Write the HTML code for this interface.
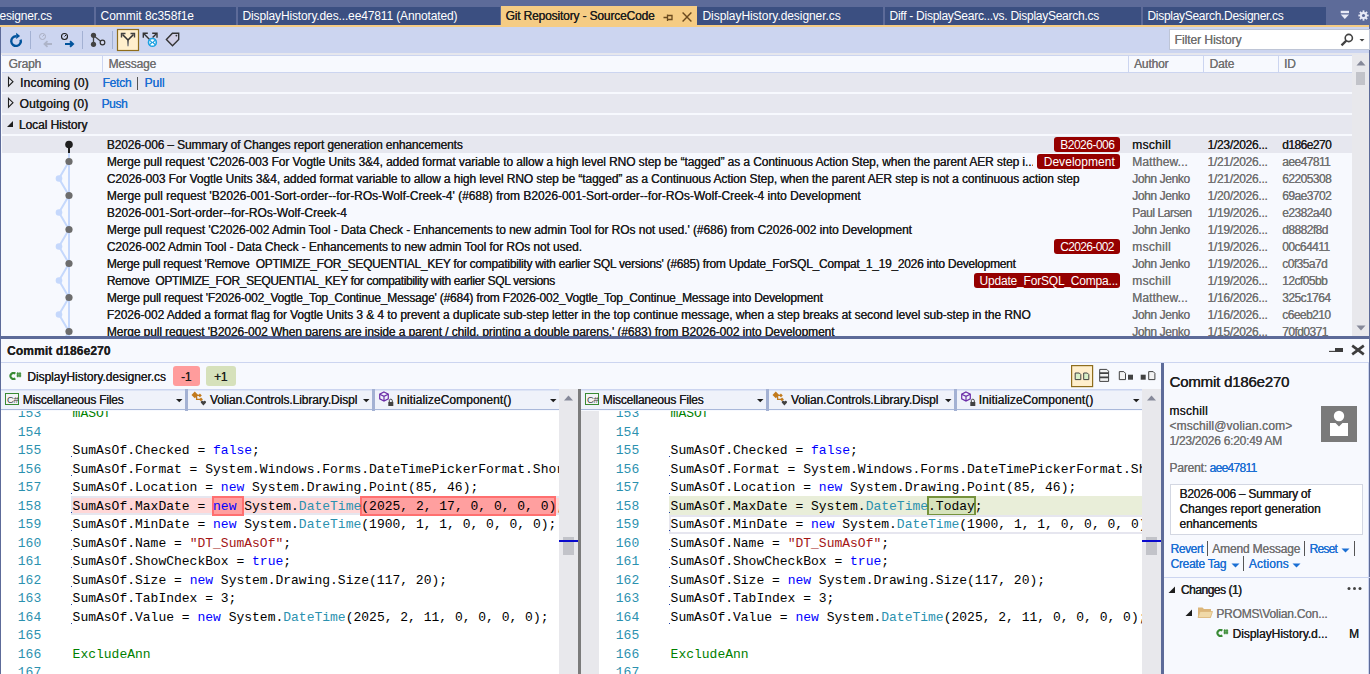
<!DOCTYPE html><html><head><meta charset="utf-8"><style>
*{box-sizing:border-box;margin:0;padding:0}
html,body{width:1370px;height:674px;overflow:hidden;background:#f7f9fe;font-family:"Liberation Sans",sans-serif;font-size:12px;letter-spacing:-0.15px;color:#1e1e1e;position:relative}
.a{position:absolute}
.t{position:absolute;white-space:pre;line-height:12px;text-shadow:0.15px 0 0 currentColor}
.sb{text-shadow:0.35px 0 0 currentColor}
.g{color:#717171}
.lk{color:#1a6fd3}
.w{color:#fff;text-shadow:none !important}
.sec{position:absolute;left:2px;width:1350px;height:19px;background:#e6e7ef}
.badge{position:absolute;height:15px;background:#950000;border-radius:3px}
.code{font-family:"Liberation Mono",monospace;font-size:13px;letter-spacing:0}
.cl{position:absolute;white-space:pre;line-height:18.5px;height:18.5px}
.ln{color:#2b91af}
.kw{color:#0000ff}
.ty{color:#2b91af}
.st{color:#a31515}
.cm{color:#008000}
.dd{position:absolute;top:390px;height:20px;background:#eff2fa;border-top:1px solid #dde4f5;border-bottom:1px solid #a9b8da}
.sep3{position:absolute;top:389px;width:3px;height:22px;background:#a3b1d3}
</style></head><body>
<div class="a" style="left:0;top:0;width:1370px;height:27px;background:#5d6b99"></div>
<div class="a" style="left:0px;top:7px;width:94px;height:18px;background:#3b4f81"></div>
<span class="t w" style="left:-0.5px;top:10px;letter-spacing:-0.170px;">esigner.cs</span>
<div class="a" style="left:96px;top:7px;width:140px;height:18px;background:#3b4f81"></div>
<span class="t w" style="left:100.5px;top:10px;letter-spacing:-0.039px;">Commit 8c358f1e</span>
<div class="a" style="left:238px;top:7px;width:262px;height:18px;background:#3b4f81"></div>
<span class="t w" style="left:242.5px;top:10px;letter-spacing:-0.137px;">DisplayHistory.des...ee47811 (Annotated)</span>
<div class="a" style="left:697px;top:7px;width:186px;height:18px;background:#3b4f81"></div>
<span class="t w" style="left:702.5px;top:10px;letter-spacing:-0.065px;">DisplayHistory.designer.cs</span>
<div class="a" style="left:885px;top:7px;width:256px;height:18px;background:#3b4f81"></div>
<span class="t w" style="left:889.5px;top:10px;letter-spacing:-0.264px;">Diff - DisplaySearc...vs. DisplaySearch.cs</span>
<div class="a" style="left:1143px;top:7px;width:183px;height:18px;background:#3b4f81"></div>
<span class="t w" style="left:1147.5px;top:10px;letter-spacing:-0.296px;">DisplaySearch.Designer.cs</span>
<div class="a" style="left:501px;top:6px;width:196px;height:21px;background:#f5cc84"></div>
<span class="t " style="left:505.5px;top:10px;letter-spacing:-0.158px;">Git Repository - SourceCode</span>
<svg class="a" style="left:663px;top:13px" width="10" height="9" viewBox="0 0 10 9"><path d="M0.5 4.5H4M4.5 1.5V8M4.5 2.5H9V6.5H4.5" stroke="#6b4a1e" stroke-width="1.3" fill="none"/></svg>
<svg class="a" style="left:682px;top:12px" width="10" height="10" viewBox="0 0 10 10"><path d="M0.6 0.6L9.4 9.4M9.4 0.6L0.6 9.4" stroke="#6b4a1e" stroke-width="1.4"/></svg>
<svg class="a" style="left:1340px;top:10px" width="10" height="10" viewBox="0 0 10 10"><rect x="0.7" y="0.8" width="8.3" height="2.4" fill="#e8eaf6"/><path d="M0.7 4.6H9L4.85 9Z" fill="#e8eaf6"/></svg>
<svg class="a" style="left:1357.5px;top:9.5px" width="11" height="11" viewBox="0 0 12 12"><g fill="#e8eaf6"><circle cx="6" cy="6" r="3.9"/><rect x="5" y="0.4" width="2" height="11.2"/><rect x="0.4" y="5" width="11.2" height="2"/><rect x="5" y="0.4" width="2" height="11.2" transform="rotate(45 6 6)"/><rect x="5" y="0.4" width="2" height="11.2" transform="rotate(-45 6 6)"/></g><circle cx="6" cy="6" r="1.7" fill="#5d6b99"/></svg>
<div class="a" style="left:0;top:25px;width:1369px;height:2px;background:#f5cc84"></div>
<div class="a" style="left:1px;top:27px;width:1368px;height:26px;background:#ccd5f0"></div>
<div class="a" style="left:1px;top:53px;width:1368px;height:2px;background:#e6e7ed"></div>
<div class="a" style="left:0;top:27px;width:1px;height:647px;background:#5d6b99"></div>
<div class="a" style="left:1369px;top:25px;width:1px;height:649px;background:#5d6b99"></div>
<svg class="a" style="left:0;top:27px" width="190" height="26" viewBox="0 0 190 26">
<g fill="#a3b1d3"><rect x="30" y="4" width="1" height="18"/><rect x="82" y="4" width="1" height="18"/><rect x="112" y="4" width="1" height="18"/></g>
<path d="M20.6 12.6A4.8 4.8 0 1 1 16.2 9.3" fill="none" stroke="#00539c" stroke-width="2.4"/>
<path d="M16.2 5.8L20.1 9L16.2 12Z" fill="#00539c"/>
<circle cx="42.5" cy="9.5" r="3" fill="none" stroke="#a9aec0" stroke-width="1"/><path d="M42.5 9.5L44 8" stroke="#a9aec0" stroke-width="1"/>
<path d="M52 17H45M47.5 14.2L44.5 17L47.5 19.8" fill="none" stroke="#aeb4c8" stroke-width="1.8"/>
<circle cx="64.5" cy="9.5" r="3" fill="none" stroke="#1e1e1e" stroke-width="1.1"/><path d="M64.5 9.5L66 8" stroke="#1e1e1e" stroke-width="1"/>
<path d="M65 17H72.5M70 14.2L73 17L70 19.8" fill="none" stroke="#00539c" stroke-width="2"/>
<line x1="93.5" y1="8.5" x2="93.5" y2="17.3" stroke="#424242" stroke-width="1.3"/>
<line x1="93.5" y1="8.5" x2="101" y2="14.5" stroke="#424242" stroke-width="1.1"/>
<circle cx="93.5" cy="8.3" r="2.6" fill="#424242"/><circle cx="93.5" cy="17.3" r="2.6" fill="#424242"/>
<circle cx="102.5" cy="15.5" r="2.3" fill="#d6dbf2" stroke="#333" stroke-width="1.2"/>
<rect x="117.5" y="2.5" width="21" height="21" fill="#ffefcc" stroke="#8f6d1c" stroke-width="1.2"/>
<defs><linearGradient id="yg" x1="0" y1="0" x2="0" y2="1"><stop offset="0" stop-color="#333"/><stop offset="1" stop-color="#999"/></linearGradient></defs><path d="M128 13L122.5 7.5M128 13L133.5 7.5" fill="none" stroke="#333" stroke-width="1.6"/><rect x="127.2" y="12.5" width="1.6" height="6.8" fill="url(#yg)"/>
<path d="M121.5 10.5V6.5H125.5M134.5 10.5V6.5H130.5" fill="none" stroke="#424242" stroke-width="1.4"/>
<path d="M143.9 6.8L149.8 12.7M156.4 6.8L152.6 10.6" fill="none" stroke="#333" stroke-width="1.4"/>
<path d="M143.3 10.8V6.2H147.8M152.2 6.2H157V10.8" fill="none" stroke="#333" stroke-width="1.4"/>
<circle cx="152.4" cy="15.4" r="3.9" fill="#fff" stroke="#1ba1e2" stroke-width="1.6"/>
<path d="M149.4 12.9L151.9 15.4L149.4 17.9M155.4 12.9L152.9 15.4L155.4 17.9" fill="none" stroke="#1ba1e2" stroke-width="1.3"/>
<path d="M172.4 6.2H178.7V12.5L172.5 18.7L166.4 12.6Z" fill="#d0cfe6" stroke="#333" stroke-width="1.4" stroke-linejoin="miter"/>
<circle cx="176.4" cy="8.6" r="0.9" fill="#333"/>
</svg>
<div class="a" style="left:1169px;top:29px;width:201px;height:21px;background:#fff;border:1px solid #bec5d6"></div>
<span class="t g" style="left:1174.6px;top:34px;letter-spacing:-0.034px;">Filter History</span>
<svg class="a" style="left:1340px;top:33px" width="28" height="14" viewBox="0 0 28 14"><circle cx="8.8" cy="5" r="3.6" fill="none" stroke="#424242" stroke-width="1.6"/><path d="M6.3 7.6L1.5 12.4" stroke="#424242" stroke-width="2.2"/><path d="M19.5 6H24.5L22 8.5Z" fill="#424242"/></svg>
<div class="a" style="left:2px;top:55px;width:1350px;height:18px;background:#f7f9fe;border-top:1px solid #ccd5f0;border-bottom:1px solid #ccd5f0"></div>
<div class="a" style="left:102px;top:56px;width:1px;height:16px;background:#ccd5f0"></div>
<div class="a" style="left:1128px;top:56px;width:1px;height:16px;background:#ccd5f0"></div>
<div class="a" style="left:1203px;top:56px;width:1px;height:16px;background:#ccd5f0"></div>
<div class="a" style="left:1278px;top:56px;width:1px;height:16px;background:#ccd5f0"></div>
<span class="t g" style="left:8.5px;top:58px;">Graph</span>
<span class="t g" style="left:108.5px;top:58px;">Message</span>
<span class="t g" style="left:1134px;top:58px;">Author</span>
<span class="t g" style="left:1209.5px;top:58px;">Date</span>
<span class="t g" style="left:1284px;top:58px;">ID</span>
<div class="sec" style="top:73px"></div>
<div class="sec" style="top:94px"></div>
<div class="sec" style="top:115px"></div>
<svg class="a" style="left:7px;top:76px" width="8" height="12" viewBox="0 0 8 12"><path d="M1.5 1.3L6 5.7L1.5 10.1Z" fill="none" stroke="#1e1e1e" stroke-width="1.1"/></svg>
<svg class="a" style="left:7px;top:97px" width="8" height="12" viewBox="0 0 8 12"><path d="M1.5 1.3L6 5.7L1.5 10.1Z" fill="none" stroke="#1e1e1e" stroke-width="1.1"/></svg>
<svg class="a" style="left:6px;top:120px" width="8" height="8" viewBox="0 0 8 8"><path d="M7 1V7H1Z" fill="#1e1e1e"/></svg>
<span class="t sb" style="left:20px;top:77px;letter-spacing:0.172px;">Incoming (0)</span>
<span class="t lk" style="left:102.5px;top:77px;letter-spacing:-0.229px;">Fetch</span>
<span class="a" style="left:137px;top:77px;width:1px;height:13px;background:#555"></span>
<span class="t lk" style="left:144.5px;top:77px;letter-spacing:0.028px;">Pull</span>
<span class="t sb" style="left:19.5px;top:98px;letter-spacing:0.172px;">Outgoing (0)</span>
<span class="t lk" style="left:101.5px;top:98px;letter-spacing:-0.386px;">Push</span>
<span class="t sb" style="left:18.8px;top:119px;letter-spacing:-0.072px;">Local History</span>
<div class="a" style="left:1352px;top:55px;width:17px;height:281px;background:#e8e8ec"></div>
<svg class="a" style="left:1356px;top:60px" width="10" height="6"><path d="M0.5 5.5L5 0.5L9.5 5.5Z" fill="#868999"/></svg>
<div class="a" style="left:1356px;top:72px;width:9px;height:13px;background:#c2c3c9"></div>
<svg class="a" style="left:1356px;top:325px" width="10" height="6"><path d="M0.5 0.5L5 5.5L9.5 0.5Z" fill="#868999"/></svg>
<div class="a" style="left:0;top:136px;width:1352px;height:200px;overflow:hidden">
<div class="a" style="left:2px;top:0;width:1350px;height:17px;background:#e6e7ef"></div>
<svg class="a" style="left:0;top:0" width="100" height="200" viewBox="0 0 100 200"><line x1="69" y1="17" x2="69" y2="200" stroke="#c5d8fc" stroke-width="2"/><polyline points="69,25.5 59,42.5 69,59.5" fill="none" stroke="#c5d8fc" stroke-width="2"/><polyline points="69,59.5 59,76.5 69,93.5" fill="none" stroke="#c5d8fc" stroke-width="2"/><polyline points="69,93.5 59,110.5 69,127.5" fill="none" stroke="#c5d8fc" stroke-width="2"/><polyline points="69,127.5 59,144.5 69,161.5" fill="none" stroke="#c5d8fc" stroke-width="2"/><polyline points="69,161.5 59,178.5 69,195.5" fill="none" stroke="#c5d8fc" stroke-width="2"/><polyline points="69,195.5 59,212.5 69,229.5" fill="none" stroke="#c5d8fc" stroke-width="2"/><circle cx="69" cy="25.5" r="3.6" fill="#6d6d6d"/><circle cx="59" cy="42.5" r="3.3" fill="#c5d8fc"/><circle cx="69" cy="59.5" r="3.6" fill="#6d6d6d"/><circle cx="59" cy="76.5" r="3.3" fill="#c5d8fc"/><circle cx="69" cy="93.5" r="3.6" fill="#6d6d6d"/><circle cx="59" cy="110.5" r="3.3" fill="#c5d8fc"/><circle cx="69" cy="127.5" r="3.6" fill="#6d6d6d"/><circle cx="59" cy="144.5" r="3.3" fill="#c5d8fc"/><circle cx="69" cy="161.5" r="3.6" fill="#6d6d6d"/><circle cx="59" cy="178.5" r="3.3" fill="#c5d8fc"/><circle cx="69" cy="195.5" r="3.6" fill="#6d6d6d"/><line x1="69" y1="8" x2="69" y2="17" stroke="#1e1e1e" stroke-width="2"/><circle cx="69" cy="8.5" r="3.8" fill="#1e1e1e"/></svg>
<div class="a" style="left:104px;top:0px;width:946px;height:17px;overflow:hidden">
<span class="t " style="left:2.8px;top:3px;letter-spacing:-0.148px;">B2026-006 – Summary of Changes report generation enhancements</span>
</div>
<div class="badge" style="left:1054px;top:1px;width:66px"></div>
<span class="t w" style="left:1060.3px;top:3px;letter-spacing:-0.515px;">B2026-006</span>
<span class="t " style="left:1132.2px;top:3px;letter-spacing:0.305px;">mschill</span>
<span class="t " style="left:1207.5px;top:3px;letter-spacing:-0.281px;">1/23/2026...</span>
<span class="t " style="left:1282.2px;top:3px;letter-spacing:-0.556px;">d186e270</span>
<div class="a" style="left:104px;top:17px;width:929px;height:17px;overflow:hidden">
<span class="t " style="left:2.8px;top:3px;letter-spacing:-0.101px;">Merge pull request &#x27;C2026-003 For Vogtle Units 3&amp;4, added format variable to allow a high level RNO step be “tagged” as a Continuous Action Step, when the parent AER step i...</span>
</div>
<div class="badge" style="left:1037px;top:18px;width:83px"></div>
<span class="t w" style="left:1043.7px;top:20px;letter-spacing:0.048px;">Development</span>
<span class="t g" style="left:1132.2px;top:20px;letter-spacing:0.100px;">Matthew...</span>
<span class="t g" style="left:1207.5px;top:20px;letter-spacing:-0.281px;">1/21/2026...</span>
<span class="t g" style="left:1282.2px;top:20px;letter-spacing:-0.556px;">aee47811</span>
<div class="a" style="left:104px;top:34px;width:1022px;height:17px;overflow:hidden">
<span class="t " style="left:2.8px;top:3px;letter-spacing:-0.092px;">C2026-003 For Vogtle Units 3&amp;4, added format variable to allow a high level RNO step be “tagged” as a Continuous Action Step, when the parent AER step is not a continuous action step</span>
</div>
<span class="t g" style="left:1132.2px;top:37px;letter-spacing:-0.388px;">John Jenko</span>
<span class="t g" style="left:1207.5px;top:37px;letter-spacing:-0.281px;">1/21/2026...</span>
<span class="t g" style="left:1282.2px;top:37px;letter-spacing:-0.556px;">62205308</span>
<div class="a" style="left:104px;top:51px;width:1022px;height:17px;overflow:hidden">
<span class="t " style="left:2.8px;top:3px;letter-spacing:-0.009px;">Merge pull request &#x27;B2026-001-Sort-order--for-ROs-Wolf-Creek-4&#x27; (#688) from B2026-001-Sort-order--for-ROs-Wolf-Creek-4 into Development</span>
</div>
<span class="t g" style="left:1132.2px;top:54px;letter-spacing:-0.388px;">John Jenko</span>
<span class="t g" style="left:1207.5px;top:54px;letter-spacing:-0.281px;">1/20/2026...</span>
<span class="t g" style="left:1282.2px;top:54px;letter-spacing:-0.556px;">69ae3702</span>
<div class="a" style="left:104px;top:68px;width:1022px;height:17px;overflow:hidden">
<span class="t " style="left:2.8px;top:3px;letter-spacing:-0.027px;">B2026-001-Sort-order--for-ROs-Wolf-Creek-4</span>
</div>
<span class="t g" style="left:1132.2px;top:71px;letter-spacing:-0.425px;">Paul Larsen</span>
<span class="t g" style="left:1207.5px;top:71px;letter-spacing:-0.281px;">1/19/2026...</span>
<span class="t g" style="left:1282.2px;top:71px;letter-spacing:-0.556px;">e2382a40</span>
<div class="a" style="left:104px;top:85px;width:1022px;height:17px;overflow:hidden">
<span class="t " style="left:2.8px;top:3px;letter-spacing:-0.066px;">Merge pull request &#x27;C2026-002 Admin Tool - Data Check - Enhancements to new admin Tool for ROs not used.&#x27; (#686) from C2026-002 into Development</span>
</div>
<span class="t g" style="left:1132.2px;top:88px;letter-spacing:-0.388px;">John Jenko</span>
<span class="t g" style="left:1207.5px;top:88px;letter-spacing:-0.281px;">1/19/2026...</span>
<span class="t g" style="left:1282.2px;top:88px;letter-spacing:-0.556px;">d8882f8d</span>
<div class="a" style="left:104px;top:102px;width:946px;height:17px;overflow:hidden">
<span class="t " style="left:2.8px;top:3px;letter-spacing:-0.088px;">C2026-002 Admin Tool - Data Check - Enhancements to new admin Tool for ROs not used.</span>
</div>
<div class="badge" style="left:1054px;top:103px;width:66px"></div>
<span class="t w" style="left:1060.2px;top:105px;letter-spacing:-0.649px;">C2026-002</span>
<span class="t g" style="left:1132.2px;top:105px;letter-spacing:0.305px;">mschill</span>
<span class="t g" style="left:1207.5px;top:105px;letter-spacing:-0.281px;">1/19/2026...</span>
<span class="t g" style="left:1282.2px;top:105px;letter-spacing:-0.556px;">00c64411</span>
<div class="a" style="left:104px;top:119px;width:1022px;height:17px;overflow:hidden">
<span class="t " style="left:2.8px;top:3px;letter-spacing:-0.268px;">Merge pull request &#x27;Remove  OPTIMIZE_FOR_SEQUENTIAL_KEY for compatibility with earlier SQL versions&#x27; (#685) from Update_ForSQL_Compat_1_19_2026 into Development</span>
</div>
<span class="t g" style="left:1132.2px;top:122px;letter-spacing:-0.388px;">John Jenko</span>
<span class="t g" style="left:1207.5px;top:122px;letter-spacing:-0.281px;">1/19/2026...</span>
<span class="t g" style="left:1282.2px;top:122px;letter-spacing:-0.556px;">c0f35a7d</span>
<div class="a" style="left:104px;top:136px;width:866px;height:17px;overflow:hidden">
<span class="t " style="left:2.8px;top:3px;letter-spacing:-0.356px;">Remove  OPTIMIZE_FOR_SEQUENTIAL_KEY for compatibility with earlier SQL versions</span>
</div>
<div class="badge" style="left:974px;top:137px;width:146px"></div>
<span class="t w" style="left:979.6px;top:139px;letter-spacing:-0.202px;">Update_ForSQL_Compa...</span>
<span class="t g" style="left:1132.2px;top:139px;letter-spacing:0.305px;">mschill</span>
<span class="t g" style="left:1207.5px;top:139px;letter-spacing:-0.281px;">1/19/2026...</span>
<span class="t g" style="left:1282.2px;top:139px;letter-spacing:-0.556px;">12cf05bb</span>
<div class="a" style="left:104px;top:153px;width:1022px;height:17px;overflow:hidden">
<span class="t " style="left:2.8px;top:3px;letter-spacing:-0.202px;">Merge pull request &#x27;F2026-002_Vogtle_Top_Continue_Message&#x27; (#684) from F2026-002_Vogtle_Top_Continue_Message into Development</span>
</div>
<span class="t g" style="left:1132.2px;top:156px;letter-spacing:0.100px;">Matthew...</span>
<span class="t g" style="left:1207.5px;top:156px;letter-spacing:-0.281px;">1/16/2026...</span>
<span class="t g" style="left:1282.2px;top:156px;letter-spacing:-0.556px;">325c1764</span>
<div class="a" style="left:104px;top:170px;width:1022px;height:17px;overflow:hidden">
<span class="t " style="left:2.8px;top:3px;letter-spacing:-0.084px;">F2026-002 Added a format flag for Vogtle Units 3 &amp; 4 to prevent a duplicate sub-step letter in the top continue message, when a step breaks at second level sub-step in the RNO</span>
</div>
<span class="t g" style="left:1132.2px;top:173px;letter-spacing:-0.388px;">John Jenko</span>
<span class="t g" style="left:1207.5px;top:173px;letter-spacing:-0.281px;">1/16/2026...</span>
<span class="t g" style="left:1282.2px;top:173px;letter-spacing:-0.556px;">c6eeb210</span>
<div class="a" style="left:104px;top:187px;width:1022px;height:17px;overflow:hidden">
<span class="t " style="left:2.8px;top:3px;letter-spacing:-0.099px;">Merge pull request &#x27;B2026-002 When parens are inside a parent / child, printing a double parens.&#x27; (#683) from B2026-002 into Development</span>
</div>
<span class="t g" style="left:1132.2px;top:190px;letter-spacing:-0.388px;">John Jenko</span>
<span class="t g" style="left:1207.5px;top:190px;letter-spacing:-0.281px;">1/15/2026...</span>
<span class="t g" style="left:1282.2px;top:190px;letter-spacing:-0.556px;">70fd0371</span>
</div>
<div class="a" style="left:0;top:336px;width:1370px;height:3px;background:#5d6b99"></div>
<div class="a" style="left:1px;top:362px;width:1368px;height:1px;background:#ccd5f0"></div>
<span class="t " style="left:7px;top:345px;letter-spacing:0.104px;font-weight:bold">Commit d186e270</span>
<svg class="a" style="left:1328px;top:344px" width="40" height="13" viewBox="0 0 40 13"><path d="M1 7.4H7.5" stroke="#3d3d3d" stroke-width="1.1"/><rect x="7" y="4" width="8" height="4" fill="#3d3d3d"/><path d="M24.2 1.6L35.8 10.4M35.8 1.6L24.2 10.4" stroke="#3d3d3d" stroke-width="2.6"/></svg>
<svg class="a" style="left:8.5px;top:372px" width="13" height="8" viewBox="0 0 13 8"><path d="M6.3 1.6A3 3 0 1 0 6.3 6.4" fill="none" stroke="#388a34" stroke-width="2.1"/><path d="M8.8 0.3V5.3M11 0.3V5.3M7.6 1.8H12.2M7.6 3.9H12.2" stroke="#388a34" stroke-width="1.3"/></svg>
<span class="t " style="left:27.3px;top:371px;letter-spacing:-0.049px;">DisplayHistory.designer.cs</span>
<div class="a" style="left:173px;top:366px;width:27px;height:20px;background:#ff9c9c;border-radius:3px"></div>
<span class="t " style="left:181px;top:371px;">-1</span>
<div class="a" style="left:206px;top:366px;width:30px;height:20px;background:#d6e1bb;border-radius:3px"></div>
<span class="t " style="left:214px;top:371px;">+1</span>
<div class="a" style="left:1px;top:389px;width:1160px;height:1px;background:#ccd5f0"></div>
<svg class="a" style="left:1070px;top:364px" width="90" height="24" viewBox="0 0 90 24">
<rect x="1.6" y="1.6" width="21" height="21" fill="#ffefcc" stroke="#8f6d1c" stroke-width="1.2"/>
<path d="M5.2 9H9.3L10.8 10.5V15.6H5.2Z" fill="#d8f0c8" stroke="#424242" stroke-width="1"/>
<path d="M13.7 9H17.3L18.8 10.5V15.6H13.7Z" fill="#d8f0c8" stroke="#424242" stroke-width="1"/>
<path d="M29.7 5.4H36.8L38.6 7.2V17.4H29.7Z" fill="#f3f3f3" stroke="#424242" stroke-width="1"/>
<path d="M29.7 9.2H38.6M29.7 13.4H38.6" stroke="#424242" stroke-width="1.8"/>
<path d="M49.3 7.6H53.8L55.5 9.3V15.6H49.3Z" fill="#f3f3f3" stroke="#424242" stroke-width="1"/>
<rect x="58" y="10.7" width="5" height="5" fill="#424242"/>
<rect x="70.7" y="10.7" width="5" height="5" fill="#424242"/>
<path d="M78.7 7.6H83.2L84.9 9.3V15.6H78.7Z" fill="#f3f3f3" stroke="#424242" stroke-width="1"/>
</svg>
<div class="a" style="left:1161px;top:363px;width:3px;height:311px;background:#5d6b99"></div>
<div class="dd" style="left:1px;width:184px"></div>
<div class="sep3" style="left:185px"></div>
<div class="a" style="left:5px;top:393px;width:14px;height:12px;border:1.5px solid #388a34;background:#f3f3f6"></div>
<span class="t" style="left:7px;top:395px;font-size:9.5px;line-height:9px;letter-spacing:-0.3px;color:#444;text-shadow:none">C#</span>
<span class="t " style="left:22.7px;top:394px;letter-spacing:-0.207px;">Miscellaneous Files</span>
<svg class="a" style="left:176px;top:399px" width="7" height="4" viewBox="0 0 7 4"><path d="M0 0H6.5L3.25 3.3Z" fill="#1e1e1e"/></svg>
<div class="dd" style="left:188px;width:184px"></div>
<div class="sep3" style="left:372px"></div>
<svg class="a" style="left:191px;top:391px" width="16" height="16" viewBox="0 0 16 16"><path d="M3.8 0.6L7.1 3.9L3.8 7.2L0.5 3.9Z" fill="#c27a1c"/><path d="M8.9 2.5L10.8 4.4L8.9 6.3L7 4.4Z" fill="#c27a1c"/><path d="M10 6.5L11.9 8.4L10 10.3L8.1 8.4Z" fill="#c27a1c"/><path d="M5.3 4.4H8M5.6 4.5V8.4H9" stroke="#c27a1c" stroke-width="1.3" fill="none"/><path d="M12.4 14.6L9.9 11.8A1.35 1.35 0 0 1 12.4 10.5A1.35 1.35 0 0 1 14.9 11.8Z" fill="#424242"/></svg>
<span class="t " style="left:209.9px;top:394px;letter-spacing:-0.087px;">Volian.Controls.Library.Displ</span>
<svg class="a" style="left:363px;top:399px" width="7" height="4" viewBox="0 0 7 4"><path d="M0 0H6.5L3.25 3.3Z" fill="#1e1e1e"/></svg>
<div class="dd" style="left:375px;width:184px"></div>
<svg class="a" style="left:379px;top:391px" width="16" height="16" viewBox="0 0 16 16"><path d="M5 1L9.3 3.2V7.8L5 10L0.7 7.8V3.2Z M0.7 3.2L5 5.4L9.3 3.2M5 5.4V10" fill="none" stroke="#6c2ea8" stroke-width="1.2"/><rect x="9.3" y="11" width="5" height="4" fill="#424242"/><path d="M10.3 11V9.7A1.5 1.5 0 0 1 13.3 9.7V11" fill="none" stroke="#424242" stroke-width="1"/></svg>
<span class="t " style="left:396.7px;top:394px;letter-spacing:0.060px;">InitializeComponent()</span>
<svg class="a" style="left:550px;top:399px" width="7" height="4" viewBox="0 0 7 4"><path d="M0 0H6.5L3.25 3.3Z" fill="#1e1e1e"/></svg>
<div class="dd" style="left:581px;width:185px"></div>
<div class="sep3" style="left:766px"></div>
<div class="a" style="left:585px;top:393px;width:14px;height:12px;border:1.5px solid #388a34;background:#f3f3f6"></div>
<span class="t" style="left:587px;top:395px;font-size:9.5px;line-height:9px;letter-spacing:-0.3px;color:#444;text-shadow:none">C#</span>
<span class="t " style="left:602.7px;top:394px;letter-spacing:-0.207px;">Miscellaneous Files</span>
<svg class="a" style="left:757px;top:399px" width="7" height="4" viewBox="0 0 7 4"><path d="M0 0H6.5L3.25 3.3Z" fill="#1e1e1e"/></svg>
<div class="dd" style="left:769px;width:185px"></div>
<div class="sep3" style="left:954px"></div>
<svg class="a" style="left:772px;top:391px" width="16" height="16" viewBox="0 0 16 16"><path d="M3.8 0.6L7.1 3.9L3.8 7.2L0.5 3.9Z" fill="#c27a1c"/><path d="M8.9 2.5L10.8 4.4L8.9 6.3L7 4.4Z" fill="#c27a1c"/><path d="M10 6.5L11.9 8.4L10 10.3L8.1 8.4Z" fill="#c27a1c"/><path d="M5.3 4.4H8M5.6 4.5V8.4H9" stroke="#c27a1c" stroke-width="1.3" fill="none"/><path d="M12.4 14.6L9.9 11.8A1.35 1.35 0 0 1 12.4 10.5A1.35 1.35 0 0 1 14.9 11.8Z" fill="#424242"/></svg>
<span class="t " style="left:790.9px;top:394px;letter-spacing:-0.087px;">Volian.Controls.Library.Displ</span>
<svg class="a" style="left:945px;top:399px" width="7" height="4" viewBox="0 0 7 4"><path d="M0 0H6.5L3.25 3.3Z" fill="#1e1e1e"/></svg>
<div class="dd" style="left:957px;width:185px"></div>
<svg class="a" style="left:961px;top:391px" width="16" height="16" viewBox="0 0 16 16"><path d="M5 1L9.3 3.2V7.8L5 10L0.7 7.8V3.2Z M0.7 3.2L5 5.4L9.3 3.2M5 5.4V10" fill="none" stroke="#6c2ea8" stroke-width="1.2"/><rect x="9.3" y="11" width="5" height="4" fill="#424242"/><path d="M10.3 11V9.7A1.5 1.5 0 0 1 13.3 9.7V11" fill="none" stroke="#424242" stroke-width="1"/></svg>
<span class="t " style="left:978.7px;top:394px;letter-spacing:0.060px;">InitializeComponent()</span>
<svg class="a" style="left:1133px;top:399px" width="7" height="4" viewBox="0 0 7 4"><path d="M0 0H6.5L3.25 3.3Z" fill="#1e1e1e"/></svg>
<div class="a code" style="left:1px;top:411px;width:558px;height:263px;overflow:hidden;background:#fff">
<div class="a" style="left:70px;top:85px;width:488px;height:19px;background:#e6e6ef"></div>
<div class="a" style="left:72px;top:87px;width:486px;height:15px;background:#ffd7d7"></div>
<div class="a" style="left:210.5px;top:84.5px;width:32.7px;height:20.5px;background:#ff9f9f;border:2px solid #ff6f6f"></div>
<div class="a" style="left:358.69999999999993px;top:84.5px;width:196.5px;height:20.5px;background:#ff9f9f;border:2px solid #ff6f6f"></div>
<div class="a" style="left:70px;top:45px;width:1px;height:1px;background:#1f3fa8"></div>
<div class="a" style="left:70px;top:64px;width:1px;height:1px;background:#1f3fa8"></div>
<div class="a" style="left:70px;top:82px;width:1px;height:1px;background:#1f3fa8"></div>
<div class="a" style="left:70px;top:101px;width:1px;height:1px;background:#1f3fa8"></div>
<div class="a" style="left:70px;top:119px;width:1px;height:1px;background:#1f3fa8"></div>
<div class="a" style="left:70px;top:138px;width:1px;height:1px;background:#1f3fa8"></div>
<div class="a" style="left:70px;top:156px;width:1px;height:1px;background:#1f3fa8"></div>
<div class="a" style="left:70px;top:175px;width:1px;height:1px;background:#1f3fa8"></div>
<div class="a" style="left:70px;top:193px;width:1px;height:1px;background:#1f3fa8"></div>
<div class="a" style="left:70px;top:212px;width:1px;height:1px;background:#1f3fa8"></div>
<div class="cl ln" style="left:16.8px;top:-6.0px">153</div>
<div class="cl" style="left:71.6px;top:-6.0px;color:#000"><span class="cm">mASOf</span></div>
<div class="cl ln" style="left:16.8px;top:12.5px">154</div>
<div class="cl ln" style="left:16.8px;top:31.0px">155</div>
<div class="cl" style="left:71.6px;top:31.0px;color:#000">SumAsOf.Checked = <span class="kw">false</span>;</div>
<div class="cl ln" style="left:16.8px;top:49.5px">156</div>
<div class="cl" style="left:71.6px;top:49.5px;color:#000">SumAsOf.Format = System.Windows.Forms.DateTimePickerFormat.Short;</div>
<div class="cl ln" style="left:16.8px;top:68.0px">157</div>
<div class="cl" style="left:71.6px;top:68.0px;color:#000">SumAsOf.Location = <span class="kw">new</span> System.Drawing.Point(85, 46);</div>
<div class="cl ln" style="left:16.8px;top:86.5px">158</div>
<div class="cl" style="left:71.6px;top:86.5px;color:#000">SumAsOf.MaxDate = <span class="kw">new</span> System.<span class="ty">DateTime</span>(2025, 2, 17, 0, 0, 0, 0);</div>
<div class="cl ln" style="left:16.8px;top:105.0px">159</div>
<div class="cl" style="left:71.6px;top:105.0px;color:#000">SumAsOf.MinDate = <span class="kw">new</span> System.<span class="ty">DateTime</span>(1900, 1, 1, 0, 0, 0, 0);</div>
<div class="cl ln" style="left:16.8px;top:123.5px">160</div>
<div class="cl" style="left:71.6px;top:123.5px;color:#000">SumAsOf.Name = <span class="st">&quot;DT_SumAsOf&quot;</span>;</div>
<div class="cl ln" style="left:16.8px;top:142.0px">161</div>
<div class="cl" style="left:71.6px;top:142.0px;color:#000">SumAsOf.ShowCheckBox = <span class="kw">true</span>;</div>
<div class="cl ln" style="left:16.8px;top:160.5px">162</div>
<div class="cl" style="left:71.6px;top:160.5px;color:#000">SumAsOf.Size = <span class="kw">new</span> System.Drawing.Size(117, 20);</div>
<div class="cl ln" style="left:16.8px;top:179.0px">163</div>
<div class="cl" style="left:71.6px;top:179.0px;color:#000">SumAsOf.TabIndex = 3;</div>
<div class="cl ln" style="left:16.8px;top:197.5px">164</div>
<div class="cl" style="left:71.6px;top:197.5px;color:#000">SumAsOf.Value = <span class="kw">new</span> System.<span class="ty">DateTime</span>(2025, 2, 11, 0, 0, 0, 0);</div>
<div class="cl ln" style="left:16.8px;top:216.0px">165</div>
<div class="cl ln" style="left:16.8px;top:234.5px">166</div>
<div class="cl" style="left:71.6px;top:234.5px;color:#000"><span class="cm">ExcludeAnn</span></div>
<div class="cl ln" style="left:16.8px;top:253.0px">167</div>
</div>
<div class="a code" style="left:581px;top:411px;width:561px;height:263px;overflow:hidden;background:#fff">
<div class="a" style="left:0;top:0;width:18px;height:263px;background:#e8e8ec"></div>
<div class="a" style="left:88px;top:85px;width:561px;height:19px;background:#e9eed9"></div>
<div class="a" style="left:345.5px;top:84.5px;width:49.3px;height:20.5px;background:#d6e3bc;border:2px solid #76923c"></div>
<div class="a" style="left:88px;top:104px;width:561px;height:19px;border:2px solid #e6e6ef"></div>
<div class="a" style="left:88px;top:45px;width:1px;height:1px;background:#1f3fa8"></div>
<div class="a" style="left:88px;top:64px;width:1px;height:1px;background:#1f3fa8"></div>
<div class="a" style="left:88px;top:82px;width:1px;height:1px;background:#1f3fa8"></div>
<div class="a" style="left:88px;top:101px;width:1px;height:1px;background:#1f3fa8"></div>
<div class="a" style="left:88px;top:119px;width:1px;height:1px;background:#1f3fa8"></div>
<div class="a" style="left:88px;top:138px;width:1px;height:1px;background:#1f3fa8"></div>
<div class="a" style="left:88px;top:156px;width:1px;height:1px;background:#1f3fa8"></div>
<div class="a" style="left:88px;top:175px;width:1px;height:1px;background:#1f3fa8"></div>
<div class="a" style="left:88px;top:193px;width:1px;height:1px;background:#1f3fa8"></div>
<div class="a" style="left:88px;top:212px;width:1px;height:1px;background:#1f3fa8"></div>
<div class="cl ln" style="left:34.8px;top:-6.0px">153</div>
<div class="cl" style="left:89.6px;top:-6.0px;color:#000"><span class="cm">mASOf</span></div>
<div class="cl ln" style="left:34.8px;top:12.5px">154</div>
<div class="cl ln" style="left:34.8px;top:31.0px">155</div>
<div class="cl" style="left:89.6px;top:31.0px;color:#000">SumAsOf.Checked = <span class="kw">false</span>;</div>
<div class="cl ln" style="left:34.8px;top:49.5px">156</div>
<div class="cl" style="left:89.6px;top:49.5px;color:#000">SumAsOf.Format = System.Windows.Forms.DateTimePickerFormat.Short;</div>
<div class="cl ln" style="left:34.8px;top:68.0px">157</div>
<div class="cl" style="left:89.6px;top:68.0px;color:#000">SumAsOf.Location = <span class="kw">new</span> System.Drawing.Point(85, 46);</div>
<div class="cl ln" style="left:34.8px;top:86.5px">158</div>
<div class="cl" style="left:89.6px;top:86.5px;color:#000">SumAsOf.MaxDate = System.<span class="ty">DateTime</span>.Today;</div>
<div class="cl ln" style="left:34.8px;top:105.0px">159</div>
<div class="cl" style="left:89.6px;top:105.0px;color:#000">SumAsOf.MinDate = <span class="kw">new</span> System.<span class="ty">DateTime</span>(1900, 1, 1, 0, 0, 0, 0);</div>
<div class="cl ln" style="left:34.8px;top:123.5px">160</div>
<div class="cl" style="left:89.6px;top:123.5px;color:#000">SumAsOf.Name = <span class="st">&quot;DT_SumAsOf&quot;</span>;</div>
<div class="cl ln" style="left:34.8px;top:142.0px">161</div>
<div class="cl" style="left:89.6px;top:142.0px;color:#000">SumAsOf.ShowCheckBox = <span class="kw">true</span>;</div>
<div class="cl ln" style="left:34.8px;top:160.5px">162</div>
<div class="cl" style="left:89.6px;top:160.5px;color:#000">SumAsOf.Size = <span class="kw">new</span> System.Drawing.Size(117, 20);</div>
<div class="cl ln" style="left:34.8px;top:179.0px">163</div>
<div class="cl" style="left:89.6px;top:179.0px;color:#000">SumAsOf.TabIndex = 3;</div>
<div class="cl ln" style="left:34.8px;top:197.5px">164</div>
<div class="cl" style="left:89.6px;top:197.5px;color:#000">SumAsOf.Value = <span class="kw">new</span> System.<span class="ty">DateTime</span>(2025, 2, 11, 0, 0, 0, 0);</div>
<div class="cl ln" style="left:34.8px;top:216.0px">165</div>
<div class="cl ln" style="left:34.8px;top:234.5px">166</div>
<div class="cl" style="left:89.6px;top:234.5px;color:#000"><span class="cm">ExcludeAnn</span></div>
<div class="cl ln" style="left:34.8px;top:253.0px">167</div>
</div>
<div class="a" style="left:559px;top:389px;width:19px;height:285px;background:#e8e8ec"></div>
<svg class="a" style="left:564px;top:395px" width="10" height="6"><path d="M0 5.5L4.5 0.5L9 5.5Z" fill="#868999"/></svg>
<div class="a" style="left:563px;top:537px;width:11px;height:18px;background:#c2c3c9"></div>
<div class="a" style="left:559px;top:540px;width:19px;height:2px;background:#0a0acd"></div>
<div class="a" style="left:1142px;top:389px;width:19px;height:285px;background:#e8e8ec"></div>
<svg class="a" style="left:1147px;top:395px" width="10" height="6"><path d="M0 5.5L4.5 0.5L9 5.5Z" fill="#868999"/></svg>
<div class="a" style="left:1146px;top:537px;width:11px;height:18px;background:#c2c3c9"></div>
<div class="a" style="left:1142px;top:540px;width:19px;height:2px;background:#0a0acd"></div>
<div class="a" style="left:578px;top:389px;width:3px;height:285px;background:#7b7b7b"></div>
<div class="a" style="left:1368px;top:363px;width:1px;height:311px;background:#ccd5f0"></div>
<span class="t " style="left:1169.5px;top:376px;letter-spacing:-0.191px;font-size:15px;-webkit-text-stroke:0.15px #1e1e1e">Commit d186e270</span>
<span class="t " style="left:1169.4px;top:405px;letter-spacing:0.271px;color:#1e1e1e">mschill</span>
<span class="t g" style="left:1169.4px;top:420px;letter-spacing:0.135px;">&lt;mschill@volian.com&gt;</span>
<span class="t g" style="left:1169.4px;top:435px;letter-spacing:-0.244px;">1/23/2026 6:20:49 AM</span>
<svg class="a" style="left:1321px;top:406px" width="36" height="36" viewBox="0 0 36 36"><rect width="36" height="36" fill="#7a7a7a"/><circle cx="18" cy="10" r="5.2" fill="#fff"/><path d="M9 17H14.5L18 20.5L21.5 17H27V30H9Z" fill="#fff"/></svg>
<span class="t g" style="left:1169.4px;top:462px;letter-spacing:-0.167px;">Parent:</span>
<span class="t lk" style="left:1209.5px;top:462px;letter-spacing:-0.686px;">aee47811</span>
<div class="a" style="left:1170px;top:484px;width:193px;height:51px;background:#fff;border:1px solid #d3d7e2"></div>
<span class="t " style="left:1179.5px;top:488px;letter-spacing:-0.269px;">B2026-006 – Summary of</span>
<span class="t " style="left:1179.5px;top:503px;letter-spacing:-0.065px;">Changes report generation</span>
<span class="t " style="left:1179.4px;top:518px;letter-spacing:-0.085px;">enhancements</span>
<span class="t lk" style="left:1170.5px;top:543px;letter-spacing:-0.409px;">Revert</span>
<div class="a" style="left:1207px;top:541px;width:1px;height:15px;background:#555"></div>
<span class="t g" style="left:1212.2px;top:543px;letter-spacing:-0.154px;">Amend Message</span>
<div class="a" style="left:1304px;top:541px;width:1px;height:15px;background:#555"></div>
<span class="t lk" style="left:1309.6px;top:543px;letter-spacing:-0.790px;">Reset</span>
<svg class="a" style="left:1341px;top:548px" width="9" height="5"><path d="M0.5 0.5H8.5L4.5 4.5Z" fill="#1a6fd3"/></svg>
<div class="a" style="left:1354px;top:541px;width:1px;height:15px;background:#555"></div>
<span class="t lk" style="left:1170.5px;top:558px;letter-spacing:-0.287px;">Create Tag</span>
<svg class="a" style="left:1231px;top:563px" width="9" height="5"><path d="M0.5 0.5H8.5L4.5 4.5Z" fill="#1a6fd3"/></svg>
<div class="a" style="left:1243px;top:556px;width:1px;height:15px;background:#555"></div>
<span class="t lk" style="left:1248.8px;top:558px;letter-spacing:0.090px;">Actions</span>
<svg class="a" style="left:1292px;top:563px" width="9" height="5"><path d="M0.5 0.5H8.5L4.5 4.5Z" fill="#1a6fd3"/></svg>
<div class="a" style="left:1164px;top:577px;width:1204px;height:1px;background:#ccd5f0"></div>
<svg class="a" style="left:1168px;top:586px" width="8" height="8" viewBox="0 0 8 8"><path d="M7 0.5V7H0.5Z" fill="#1e1e1e"/></svg>
<span class="t sb" style="left:1180.8px;top:584px;letter-spacing:-0.485px;">Changes (1)</span>
<svg class="a" style="left:1347px;top:586px" width="15" height="5"><circle cx="2" cy="2.5" r="1.5" fill="#424242"/><circle cx="7.5" cy="2.5" r="1.5" fill="#424242"/><circle cx="13" cy="2.5" r="1.5" fill="#424242"/></svg>
<svg class="a" style="left:1185px;top:609px" width="8" height="8" viewBox="0 0 8 8"><path d="M7 0.5V7H0.5Z" fill="#1e1e1e"/></svg>
<svg class="a" style="left:1197px;top:606px" width="16" height="13" viewBox="0 0 16 13"><path d="M1 1.5H5.5L7 3H14V11.5H1Z" fill="#dcb67a"/><path d="M1 11.5L3 5.5H15.5L13.5 11.5Z" fill="#f0d9a8" stroke="#dcb67a" stroke-width="0.8"/></svg>
<span class="t g" style="left:1216.3px;top:608px;letter-spacing:-0.222px;">PROMS\Volian.Con...</span>
<svg class="a" style="left:1215.5px;top:629px" width="13" height="8" viewBox="0 0 13 8"><path d="M6.3 1.6A3 3 0 1 0 6.3 6.4" fill="none" stroke="#388a34" stroke-width="2.1"/><path d="M8.8 0.3V5.3M11 0.3V5.3M7.6 1.8H12.2M7.6 3.9H12.2" stroke="#388a34" stroke-width="1.3"/></svg>
<span class="t " style="left:1232.5px;top:628px;letter-spacing:-0.034px;">DisplayHistory.d...</span>
<span class="t " style="left:1349px;top:628px;">M</span>
</body></html>
